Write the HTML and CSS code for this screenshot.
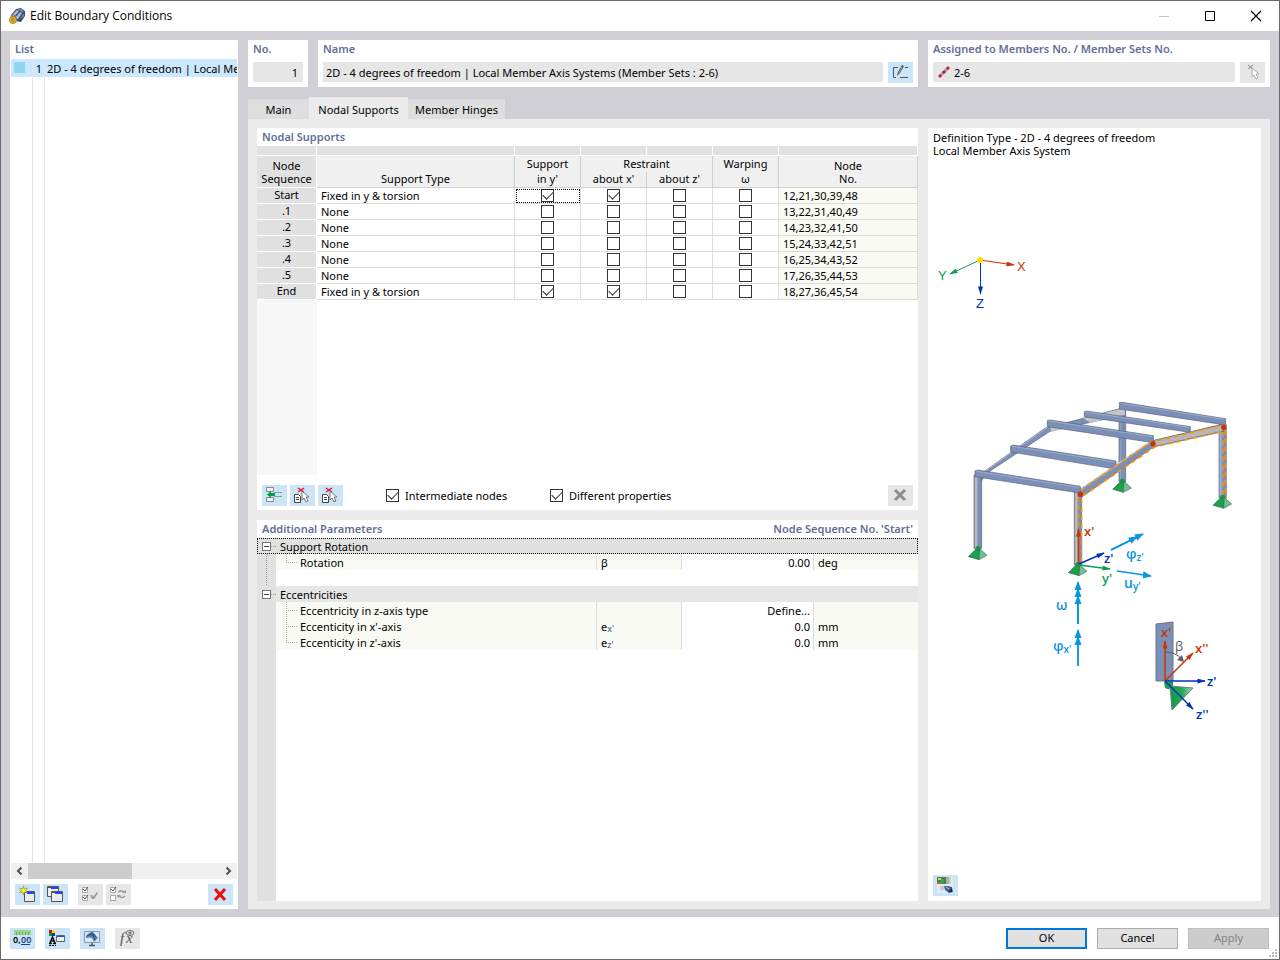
FILE: index.html
```html
<!DOCTYPE html>
<html lang="en">
<head>
<meta charset="utf-8">
<title>Edit Boundary Conditions</title>
<link rel="stylesheet" href="styles.css">
</head>
<body>
<div class="window">
  <header class="titlebar">
    <svg class="app-icon" width="16" height="16" viewBox="0 0 16 16" aria-hidden="true">
      <path d="M2 7 7 1l5-1 4 3v5l-4 6-5-1-4-2z" fill="#3f5374"/>
      <path d="M3 7 8 2l2 1-5 6zM6 10l5-6 2 1-4 6z" fill="#a9bad6"/>
      <path d="M8 1l4 0 3 2-2 1zM11 11l3-5 1 0v2z" fill="#6f88b4"/>
      <path d="M2 10V8q2-3 4 0v2" fill="none" stroke="#8a7a4a"/>
      <circle cx="4" cy="12" r="3.500" fill="#e2b93a" stroke="#a98420"/>
      <path d="M2.500 11h3M2.500 13h3" stroke="#8d6b14"/>
    </svg>
    <h1 class="window-title">Edit Boundary Conditions</h1>
    <div class="window-controls">
      <button class="win-btn" aria-label="Minimize" disabled><svg width="12" height="12" viewBox="0 0 12 12"><path d="M1 6.500h10" stroke="#c4c4c4"/></svg></button>
      <button class="win-btn" aria-label="Maximize"><svg width="12" height="12" viewBox="0 0 12 12"><path d="M1.500 1.500h9v9h-9z" fill="none" stroke="#000"/></svg></button>
      <button class="win-btn" aria-label="Close"><svg width="12" height="12" viewBox="0 0 12 12"><path d="M1 1l10 10M11 1 1 11" stroke="#000" stroke-width="1.200"/></svg></button>
    </div>
  </header>

  <main class="workspace">
    <section class="panel list-panel">
      <h2 class="panel-title">List</h2>
      <div class="list-box">
        <div class="list-row selected">
          <span class="list-cell"><i class="swatch"></i></span>
          <span class="list-cell num">1</span>
          <span class="list-name">2D - 4 degrees of freedom | Local Me</span>
        </div>
        <div class="list-row filler"><span class="list-cell"></span><span class="list-cell"></span><span></span></div>
      </div>
      <div class="scrollbar">
        <svg width="17" height="16" viewBox="0 0 17 16"><path d="M10.500 4.500 7 8l3.500 3.500" fill="none" stroke="#505050" stroke-width="2"/></svg>
        <div class="track"><div class="thumb"></div></div>
        <svg width="17" height="16" viewBox="0 0 17 16"><path d="M6.500 4.500 10 8l-3.500 3.500" fill="none" stroke="#505050" stroke-width="2"/></svg>
      </div>
      <div class="list-tools">
        <button class="icon-btn" aria-label="New"><svg width="25" height="21" viewBox="0 0 25 21"><path d="M9.500 7.500h10v10h-10z" fill="#ececec" stroke="#555"/><path d="M10 8.500h9" stroke="#555"/><path d="M12 8h7v2h-7z" fill="#2444ff"/><path d="M8.500 2l1 3 3-1-2 2.500 2 2-3-.5-1 3-1-3-3 .5 2-2-2-2.500 3 1z" fill="#ff0" stroke="#7d7d4a" stroke-width=".6"/></svg></button>
        <button class="icon-btn" aria-label="Copy"><svg width="25" height="21" viewBox="0 0 25 21"><path d="M4.500 2.500h11v10h-11z" fill="#ececec" stroke="#555"/><path d="M5 3.500h10" stroke="#555"/><path d="M8 3h7v2H8z" fill="#2444ff"/><path d="M8.500 7.500h11v10h-11z" fill="#ececec" stroke="#555"/><path d="M9 8.500h10" stroke="#555"/><path d="M12 8h7v2h-7z" fill="#2444ff"/></svg></button>
        <button class="icon-btn gap-left" aria-label="Check selected" disabled><svg width="25" height="21" viewBox="0 0 25 21"><path d="M4.500 3.500h5v5h-5zM4.500 11.500h5v5h-5z" fill="#fff" stroke="#aaa"/><path d="m5 5 2 2 3-4M5 13l2 2 3-4" fill="none" stroke="#555"/><path d="m12 11 2 0 1 2 4-5 1 1-4 6h-2z" fill="#999"/></svg></button>
        <button class="icon-btn" aria-label="Invert selection" disabled><svg width="25" height="21" viewBox="0 0 25 21"><path d="M4.500 3.500h5v5h-5zM4.500 11.500h5v5h-5z" fill="#fff" stroke="#aaa"/><path d="m5 5 2 2 3-4" fill="none" stroke="#555"/><path d="M12 8q3-2 6 0M19 12q-3 3-6 0" fill="none" stroke="#999" stroke-width="1.500"/><path d="m16 9 4 0V6zM11 11h4l-3 3z" fill="#999"/></svg></button>
        <button class="icon-btn push" aria-label="Delete"><svg width="25" height="21" viewBox="0 0 25 21"><path d="m7 5 10 11M17 5 7 16" stroke="#f00b0b" stroke-width="3"/></svg></button>
      </div>
    </section>

    <div class="editor">
      <div class="summary">
        <section class="panel field-panel">
          <label class="panel-title" for="no">No.</label>
          <div class="field-row"><input id="no" class="field right" value="1" readonly></div>
        </section>
        <section class="panel field-panel">
          <label class="panel-title" for="name">Name</label>
          <div class="field-row">
            <input id="name" class="field" value="2D - 4 degrees of freedom | Local Member Axis Systems (Member Sets : 2-6)" readonly>
            <button class="icon-btn" aria-label="Edit name"><svg width="25" height="21" viewBox="0 0 25 21"><path d="M10 5.500H5.500v10H8M12 15.500h8M17 5.500h3" fill="none" stroke="#555"/><path d="m9 14 1-4 4-7 2 1-4 7z" fill="#555"/><path d="m11 11 3-6" stroke="#999"/></svg></button>
          </div>
        </section>
        <section class="panel field-panel">
          <label class="panel-title" for="assigned">Assigned to Members No. / Member Sets No.</label>
          <div class="field-row">
            <div class="field icon-field">
              <svg width="12" height="12" viewBox="0 0 12 12"><path d="M2 10 10 2" stroke="#8aa0c8" stroke-width="3"/><circle cx="2" cy="10" r="1.500" fill="#e00"/><circle cx="6" cy="6" r="1.500" fill="#e00"/><circle cx="10" cy="2" r="1.500" fill="#e00"/></svg>
              <input id="assigned" class="bare-input" value="2-6" readonly>
            </div>
            <button class="icon-btn" aria-label="Select members" disabled><svg width="25" height="21" viewBox="0 0 25 21"><path d="m8 3 5 4M13 3 8 7" stroke="#888"/><path d="M12 6v9l2-2 2 4 2-1-2-4h3z" fill="#fff" stroke="#aaa"/></svg></button>
          </div>
        </section>
      </div>

      <div class="tabs" role="tablist">
        <button class="tab tab-main" role="tab">Main</button>
        <button class="tab tab-nodal active" role="tab" aria-selected="true">Nodal Supports</button>
        <button class="tab tab-hinges" role="tab">Member Hinges</button>
      </div>

      <div class="page">
        <section class="panel supports">
          <h2 class="panel-title">Nodal Supports</h2>
          <div class="grid-area">
          <table class="grid">
            <colgroup><col class="c-node"><col><col class="c-check"><col class="c-check"><col class="c-check"><col class="c-check"><col class="c-nos"></colgroup>
            <thead>
              <tr class="strip"><td></td><td></td><td></td><td></td><td></td><td></td><td></td></tr>
              <tr class="head-top"><th rowspan="2" class="row-head">Node<br>Sequence</th><th rowspan="2" class="low">Support Type</th><th class="open">Support</th><th colspan="2" class="open">Restraint</th><th class="open">Warping</th><th rowspan="2" class="low">Node<br>No.</th></tr>
              <tr class="head-sub"><th>in y'</th><th>about x'</th><th>about z'</th><th>ω</th></tr>
            </thead>
            <tbody>
              <tr><th>Start</th><td>Fixed in y &amp; torsion</td><td class="chk focus"><input type="checkbox" aria-label="Start support in y'" checked></td><td class="chk"><input type="checkbox" aria-label="Start restraint about x'" checked></td><td class="chk"><input type="checkbox" aria-label="Start restraint about z'"></td><td class="chk"><input type="checkbox" aria-label="Start warping"></td><td class="nos">12,21,30,39,48</td></tr>
              <tr><th>.1</th><td>None</td><td class="chk"><input type="checkbox" aria-label=".1 support in y'"></td><td class="chk"><input type="checkbox" aria-label=".1 restraint about x'"></td><td class="chk"><input type="checkbox" aria-label=".1 restraint about z'"></td><td class="chk"><input type="checkbox" aria-label=".1 warping"></td><td class="nos">13,22,31,40,49</td></tr>
              <tr><th>.2</th><td>None</td><td class="chk"><input type="checkbox" aria-label=".2 support in y'"></td><td class="chk"><input type="checkbox" aria-label=".2 restraint about x'"></td><td class="chk"><input type="checkbox" aria-label=".2 restraint about z'"></td><td class="chk"><input type="checkbox" aria-label=".2 warping"></td><td class="nos">14,23,32,41,50</td></tr>
              <tr><th>.3</th><td>None</td><td class="chk"><input type="checkbox" aria-label=".3 support in y'"></td><td class="chk"><input type="checkbox" aria-label=".3 restraint about x'"></td><td class="chk"><input type="checkbox" aria-label=".3 restraint about z'"></td><td class="chk"><input type="checkbox" aria-label=".3 warping"></td><td class="nos">15,24,33,42,51</td></tr>
              <tr><th>.4</th><td>None</td><td class="chk"><input type="checkbox" aria-label=".4 support in y'"></td><td class="chk"><input type="checkbox" aria-label=".4 restraint about x'"></td><td class="chk"><input type="checkbox" aria-label=".4 restraint about z'"></td><td class="chk"><input type="checkbox" aria-label=".4 warping"></td><td class="nos">16,25,34,43,52</td></tr>
              <tr><th>.5</th><td>None</td><td class="chk"><input type="checkbox" aria-label=".5 support in y'"></td><td class="chk"><input type="checkbox" aria-label=".5 restraint about x'"></td><td class="chk"><input type="checkbox" aria-label=".5 restraint about z'"></td><td class="chk"><input type="checkbox" aria-label=".5 warping"></td><td class="nos">17,26,35,44,53</td></tr>
              <tr><th>End</th><td>Fixed in y &amp; torsion</td><td class="chk"><input type="checkbox" aria-label="End support in y'" checked></td><td class="chk"><input type="checkbox" aria-label="End restraint about x'" checked></td><td class="chk"><input type="checkbox" aria-label="End restraint about z'"></td><td class="chk"><input type="checkbox" aria-label="End warping"></td><td class="nos">18,27,36,45,54</td></tr>
            </tbody>
          </table>
          <div class="row-head-fill"></div>
          </div>
          <div class="grid-tools">
            <button class="icon-btn" aria-label="Insert row"><svg width="25" height="21" viewBox="0 0 25 21"><path d="M4.500 2.500h7v4h-7zM4.500 12.500h7v4h-7z" fill="#f4f4f4" stroke="#888"/><path d="M12 7.500h8M12 11.500h8" stroke="#6cae86"/><path d="M5 9.500 9 6v2h4v3H9v2z" fill="#00a050"/></svg></button>
            <button class="icon-btn" aria-label="Pick node"><svg width="25" height="21" viewBox="0 0 25 21"><path d="M4.500 9.500h4l2 2v6h-6z" fill="#fff" stroke="#444"/><path d="M6 12.500h3M6 14.500h3" stroke="#444"/><path d="m8 3 6 4M14 3 8 7" stroke="#e01b24" stroke-width="1.500"/><path d="M12 6v9l2-2 2 4 2-1-2-4h3z" fill="#fff" stroke="#777"/></svg></button>
            <button class="icon-btn" aria-label="Pick nodes"><svg width="25" height="21" viewBox="0 0 25 21"><path d="M4.500 9.500h4l2 2v6h-6z" fill="#fff" stroke="#444"/><path d="M6 12.500h3M6 14.500h3" stroke="#444"/><path d="m8 3 6 4M14 3 8 7" stroke="#e01b24" stroke-width="1.500"/><path d="M12 6v9l2-2 2 4 2-1-2-4h3z" fill="#fff" stroke="#777"/></svg></button>
            <label class="option first"><input type="checkbox" checked>Intermediate nodes</label>
            <label class="option"><input type="checkbox" checked>Different properties</label>
            <button class="icon-btn push" aria-label="Clear" disabled><svg width="25" height="21" viewBox="0 0 25 21"><path d="m7 5 10 10M17 5 7 15" stroke="#8e8e8e" stroke-width="3"/></svg></button>
          </div>
        </section>

        <section class="panel params">
          <div class="panel-title split"><h2>Additional Parameters</h2><span>Node Sequence No. 'Start'</span></div>
          <div class="tree-area">
          <table class="tree">
            <colgroup><col class="t-gutter"><col><col class="t-symbol"><col class="t-value"><col class="t-unit"></colgroup>
            <tbody>
              <tr class="group current"><td class="gutter"><button class="expander" aria-label="Collapse Support Rotation"></button></td><td colspan="4">Support Rotation</td></tr>
              <tr class="item last"><td class="gutter line"></td><td class="name">Rotation</td><td>β</td><td class="value">0.00</td><td>deg</td></tr>
              <tr class="blank"><td class="gutter line"></td><td colspan="4"></td></tr>
              <tr class="group"><td class="gutter"><button class="expander" aria-label="Collapse Eccentricities"></button></td><td colspan="4">Eccentricities</td></tr>
              <tr class="item"><td class="gutter"></td><td class="name">Eccentricity in z-axis type</td><td></td><td class="value">Define...</td><td></td></tr>
              <tr class="item"><td class="gutter"></td><td class="name">Eccenticity in x'-axis</td><td>e<span class="sub">x'</span></td><td class="value">0.0</td><td>mm</td></tr>
              <tr class="item last"><td class="gutter"></td><td class="name">Eccenticity in z'-axis</td><td>e<span class="sub">z'</span></td><td class="value">0.0</td><td>mm</td></tr>
            </tbody>
          </table>
          <div class="gutter-fill"></div>
          </div>
        </section>

        <section class="panel preview">
          <p class="definition">Definition Type - 2D - 4 degrees of freedom<br>Local Member Axis System</p>
          <svg class="diagram" viewBox="928 165 333 705" preserveAspectRatio="xMidYMin meet" role="img" aria-label="Frame with supports and local axes">
            <defs>
              <linearGradient id="steel" x1="0" x2="1"><stop offset="0" stop-color="#8e9096"/><stop offset=".25" stop-color="#c6c7cc"/><stop offset=".45" stop-color="#9aa3b8"/><stop offset=".5" stop-color="#7c8fb6"/><stop offset="1" stop-color="#7c8fb6"/></linearGradient>
              <linearGradient id="cone" x1="0" x2="1"><stop offset="0" stop-color="#12994a"/><stop offset=".5" stop-color="#1fa753"/><stop offset="1" stop-color="#a5dcbb"/></linearGradient>
              <marker id="head-red" viewBox="0 0 10 6" refX="9" refY="3" markerWidth="9" markerHeight="5" markerUnits="userSpaceOnUse" orient="auto"><path d="M0 0 10 3 0 6z" fill="#cc3300"/></marker>
              <marker id="head-blue" viewBox="0 0 10 6" refX="9" refY="3" markerWidth="9" markerHeight="5" markerUnits="userSpaceOnUse" orient="auto"><path d="M0 0 10 3 0 6z" fill="#0033bb"/></marker>
              <marker id="head-green" viewBox="0 0 10 6" refX="9" refY="3" markerWidth="9" markerHeight="5" markerUnits="userSpaceOnUse" orient="auto"><path d="M0 0 10 3 0 6z" fill="#0aa14a"/></marker>
              <marker id="head-cyan" viewBox="0 0 10 8" refX="9" refY="4" markerWidth="9" markerHeight="8" markerUnits="userSpaceOnUse" orient="auto"><path d="M0 0 10 4 0 8z" fill="#0a96de"/></marker>
              <g id="support"><circle cx="0" cy="2" r="8" fill="#12994a" stroke="none"/><path d="M-7 4-29 26 3 35 5 8z" fill="#1aa04e" stroke="#48695a" stroke-width="2"/><path d="M7 4 27 22 3 35 5 8z" fill="#6cc38d" stroke="#48695a" stroke-width="2"/></g>
            </defs>

            <g fill="none" stroke-width="1">
              <path d="M980 260 1014 265" stroke="#cc3300" marker-end="url(#head-red)"/>
              <path d="M980 260 950 274" stroke="#0aa14a" marker-end="url(#head-green)"/>
              <path d="M980.500 260v34" stroke="#0033bb" marker-end="url(#head-blue)"/>
            </g>
            <circle cx="980" cy="260" r="3" fill="#ffdd00"/>
            <g class="axis-label"><text class="red" x="1017" y="271">X</text><text class="green" x="938" y="280">Y</text><text class="blue" x="976" y="308">Z</text></g>

            <g transform="translate(960 390) scale(.3333)" stroke="#59637a" stroke-width="2" stroke-linejoin="round">
              <path d="M477 60h20v215h-20z" fill="#7c8fb6"/>
              <path d="M481 65v208" stroke="#a3b1cc" stroke-width="2"/>
              <path d="m495 52v22L270 124 80 250 62 276 48 262 254 115z" fill="#7c8fb6"/>
              <path d="M495 54v20l-105 24-20-13zM270 112l50-13 40 5-85 21z" fill="#c3c5c9" stroke="none"/>
              <path d="m72 246 190-134" stroke="#b3bdd1" stroke-width="3"/>
              <path d="M478 38 486 37 797 86v16l-7 2-312-47z" fill="#7c8fb6"/>
              <path d="M482 40 794 88" stroke="#a9bbd8" stroke-width="2"/>
              <path d="M777 104h22v220h-22z" fill="#7c8fb6"/><path d="M779 106h6v216h-6z" fill="#a3b1cc" stroke="none"/>
              <path d="M373 65 380 63 691 110v14l-8 2-310-46z" fill="#7c8fb6"/><path d="M377 66 687 112" stroke="#a9bbd8" stroke-width="2"/>
              <path d="M343 300h22v225h-22z" fill="url(#steel)"/>
              <path d="M42 255h23v220H42z" fill="url(#steel)"/>
              <path d="M352 304 573 154 790 102v22L582 170 364 322z" fill="#7c8fb6"/>
              <path d="M582 151 790 103v20L582 170z" fill="#b4b7bd"/>
              <path d="M357 301 575 153" stroke="#c5cbd9" stroke-width="4"/>
              <path d="M262 92 270 90 580 137v18l-7 2-311-47z" fill="#7c8fb6"/><path d="M266 93 576 140" stroke="#a9bbd8" stroke-width="2"/>
              <path d="M152 168 159 165 468 213v10l-14 12-302-49z" fill="#7c8fb6"/><path d="M156 169 464 216" stroke="#a9bbd8" stroke-width="2"/>
              <path d="M45 243 53 240 361 289v17l-8 2L45 260z" fill="#7c8fb6"/><path d="M49 244 357 292" stroke="#a9bbd8" stroke-width="2"/>
              <g fill="none" stroke="#ff9500" stroke-width="5" stroke-dasharray="14 11">
                <path d="M355 320v200M363 300 572 157 790 105M370 317 584 171 790 124M797 120v205"/>
                <path d="M365 326v194M789 126v199" stroke-width="4"/>
              </g>
              <g fill="#cc3300" stroke="none"><circle cx="361" cy="313" r="8"/><circle cx="579" cy="161" r="8"/><circle cx="791" cy="112" r="8"/></g>
              <use href="#support" x="54" y="474"/><use href="#support" x="487" y="272"/><use href="#support" x="788" y="320"/><use href="#support" x="354" y="522"/>
            </g>

            <g fill="none" stroke-width="1.500">
              <path d="M1078.500 564v-35" stroke="#cc3300" marker-end="url(#head-red)"/>
              <path d="M1079 564 1104 553" stroke="#0033bb" marker-end="url(#head-blue)"/>
              <path d="M1079 565 1110 569" stroke="#0aa14a" marker-end="url(#head-green)"/>
              <path d="M1111 550 1143 534" stroke="#0a96de" marker-end="url(#head-cyan)"/>
              <path d="M1111 550 1137 537" stroke="#0a96de" marker-end="url(#head-cyan)"/>
              <path d="M1117 571 1151 576" stroke="#0a96de" marker-end="url(#head-cyan)"/>
              <path d="M1078 624v-42" stroke="#0a96de" marker-end="url(#head-cyan)"/>
              <path d="M1078 624v-35" stroke="#0a96de" marker-end="url(#head-cyan)"/>
              <path d="M1078 624v-28" stroke="#0a96de" marker-end="url(#head-cyan)"/>
              <path d="M1078 666v-36" stroke="#0a96de" marker-end="url(#head-cyan)"/>
              <path d="M1078 666v-29" stroke="#0a96de" marker-end="url(#head-cyan)"/>
            </g>
            <g class="local-label">
              <text class="red" x="1084" y="536">x'</text><text class="blue" x="1104" y="563">z'</text><text class="green" x="1102" y="583">y'</text>
              <text class="red" x="1195" y="653">x''</text><text class="blue" x="1207" y="686">z'</text><text class="blue" x="1196" y="719">z''</text>
            </g>
            <g class="motion-label">
              <text x="1126" y="559">φ<tspan class="index" dy="2">z'</tspan></text><text x="1124" y="588">u<tspan class="index" dy="2">y'</tspan></text>
              <text x="1056" y="610">ω</text><text x="1053" y="651">φ<tspan class="index" dy="2">x'</tspan></text>
            </g>

            <path d="M1156 624 1173 622v59h-17z" fill="#7c8fb6" stroke="#6d7486"/>
            <path d="M1164 682h9v4q-3 5-8 2z" fill="#1aa04e"/>
            <path d="M1170 686 1193 688 1172 710z" fill="url(#cone)" stroke="#6d7f74"/>
            <g fill="none" stroke-width="1.500">
              <path d="M1165 681v-40" stroke="#cc3300" marker-end="url(#head-red)"/>
              <path d="M1165 681 1193 653" stroke="#cc3300" marker-end="url(#head-red)"/>
              <path d="M1165 681h40" stroke="#0033bb" marker-end="url(#head-blue)"/>
              <path d="M1165 681 1193 709" stroke="#0033bb" marker-end="url(#head-blue)"/>
              <path d="M1165 652q10 0 17 7" stroke="#5c5c6c" stroke-width="1"/>
            </g>
            <path d="m1184 662-7-2 5-5z" fill="#5c5c6c"/>
            <g class="local-label"><text class="red" x="1161" y="637">x'</text><text class="beta" x="1175" y="651">β</text></g>
          </svg>
          <div class="preview-tools">
            <button class="icon-btn" aria-label="Switch picture"><svg width="25" height="21" viewBox="0 0 25 21"><path d="M4 2h16v16H4z" fill="#e6eae8"/><path d="M4 2h9v7H4z" fill="#55765f"/><path d="M5 3h3v2H5z" fill="#f2cf3c"/><path d="M8 4h3v4H8z" fill="#18b558"/><path d="M4 7h5v2H4z" fill="#b0702c"/><path d="M13 2h3v7h-3z" fill="#9db5a4"/><path d="M16 2h2v7h-2z" fill="#c6d4c9"/><path d="M7 11h4v4H7z" fill="#c3cad6"/><path d="M11 11h4l4 1 1 5-4 1-4-3z" fill="#42608e"/><path d="m15 17 4-4v4z" fill="#172840"/><path d="m13 12 3 2" stroke="#b8cde8"/></svg></button>
          </div>
        </section>
      </div>
    </div>
  </main>

  <footer class="footer">
    <div class="footer-tools">
      <button class="icon-btn" aria-label="Units"><svg width="25" height="21" viewBox="0 0 25 21"><path d="M4 2h17v5H4z" fill="#9bd48d"/><path d="M6.500 4v3M9.500 4v3M12.500 4v3M15.500 4v3M18.500 4v3" stroke="#6fae62"/><text class="icon-text" x="3" y="15">0,</text><text class="icon-text navy" x="11" y="15">00</text><path d="M11 16.500h9" stroke="#1b3c94"/></svg></button>
      <button class="icon-btn" aria-label="Display properties"><svg width="25" height="21" viewBox="0 0 25 21"><path d="M4 2h3v3H4z" fill="#e00"/><path d="M7 2h3v3H7z" fill="#fd0"/><path d="M4 5h3v3H4z" fill="#00a030"/><path d="M7 5h3v3H7z" fill="#13c"/><path d="M5 15 7.500 9 10 15M6 13h3M4 15.500h3M8 15.500h3" stroke="#111" stroke-width="1.500" fill="none"/><path d="M4 17.500h7" stroke="#111" stroke-dasharray="2 1"/><path d="M11.500 7.500h8v6h-8z" fill="#eee" stroke="#666"/><path d="M12 8h7v1h-7z" fill="#224ae0"/></svg></button>
      <button class="icon-btn" aria-label="View"><svg width="25" height="21" viewBox="0 0 25 21"><path d="M4.500 3.500h15v11h-15z" fill="#d6e8f7" stroke="#8c979e"/><path d="M6 8q3-4 7-4l5 6-4 4-2-4q-3-1-6 0z" fill="#5a83b3"/><path d="M7 8q3-2 6-1l2 5M10 5q4 0 6 4" fill="none" stroke="#294769"/><path d="M12 15v2M9 17.500h6" stroke="#555" stroke-width="1.500"/></svg></button>
      <button class="icon-btn" aria-label="Formula" disabled><svg width="25" height="21" viewBox="0 0 25 21"><text class="formula" x="5" y="15">f</text><text class="formula" x="11" y="15">x</text><ellipse cx="15" cy="5" rx="4" ry="2.500" fill="#ddd" stroke="#777"/><circle cx="15" cy="5" r="1.500" fill="#777"/></svg></button>
    </div>
    <div class="dialog-buttons">
      <button class="btn primary">OK</button>
      <button class="btn">Cancel</button>
      <button class="btn" disabled>Apply</button>
    </div>
    <svg class="grip" width="9" height="9" viewBox="0 0 9 9" aria-hidden="true"><path d="M6 0h2v2H6zM3 3h2v2H3zM6 3h2v2H6zM0 6h2v2H0zM3 6h2v2H3zM6 6h2v2H6z" fill="#bfbfbf"/></svg>
  </footer>
</div>
</body>
</html>
```

FILE: styles.css
```css
* { box-sizing: border-box; }
html, body { height: 100%; }
body {
  margin: 0;
  font: 11px/16px "Noto Sans", "Open Sans", sans-serif;
  color: #000;
}
button, input { font: inherit; color: inherit; margin: 0; }
button { padding: 0; border: 0; background: none; }
h1, h2, p { margin: 0; font: inherit; }
svg { display: block; }

.window {
  display: flex;
  flex-direction: column;
  min-height: 100%;
  border: 1px solid #6b6b6b;
  background: #fff;
}

/* Title bar */
.titlebar { display: flex; align-items: center; height: 30px; padding-left: 8px; }
.window-title { margin-left: 5px; font: 12px/16px "Open Sans", sans-serif; }
.window-controls { display: flex; margin-left: auto; }
.win-btn { display: flex; align-items: center; justify-content: center; width: 46px; height: 28px; }

/* Main area */
.workspace {
  flex: 1;
  display: flex;
  gap: 10px;
  padding: 9px 9px 8px;
  background: #d0cfd5;
}
.panel { background: #fff; min-width: 0; }
.panel-title {
  display: block;
  height: 18px;
  padding: 0 5px;
  line-height: 18px;
  font-weight: 600;
  color: #5f6f97;
}
.split { display: flex; justify-content: space-between; }

.icon-btn { flex: none; width: 25px; height: 21px; background: #cce4f7; }
.icon-btn:disabled { background: #e6e6e6; }
.push { margin-left: auto; }

/* List */
.list-panel { display: flex; flex-direction: column; flex: none; width: 228px; }
.list-box { flex: 1; display: flex; flex-direction: column; margin: 1px 1px 0; }
.list-row { display: grid; grid-template-columns: 22px 12px 1fr; height: 18px; line-height: 20px; }
.list-row.selected { background: #cce8ff; }
.list-row.filler { flex: 1; height: auto; }
.list-cell { border-right: 1px solid #e6e6e6; }
.num { text-align: right; padding-right: 2px; }
.list-name { padding-left: 2px; overflow: hidden; white-space: nowrap; }
.swatch { display: block; width: 11px; height: 11px; margin: 3px; background: #8fd6f5; }
.scrollbar { display: flex; height: 16px; margin: 1px 1px 0; background: #f0f0f0; }
.track { flex: 1; }
.thumb { width: 54%; height: 16px; background: #cdcdcd; }
.list-tools { display: flex; gap: 3px; padding: 5px 5px 4px; }
.gap-left { margin-left: 7px; }

/* Summary fields */
.editor { flex: 1; display: flex; flex-direction: column; min-width: 0; }
.summary { display: grid; grid-template-columns: 60px 1fr 342px; gap: 10px; }
.field-panel { height: 47px; }
.field-row { display: flex; gap: 5px; padding: 4px 5px; }
.field {
  flex: 1;
  min-width: 0;
  height: 20px;
  padding: 1px 3px 0;
  border: 0;
  background: #e6e6e6;
}
.right { text-align: right; padding-right: 5px; }
.icon-field { display: flex; align-items: center; gap: 4px; padding: 0 5px; }
.bare-input { flex: 1; min-width: 0; height: 20px; padding: 1px 0 0; border: 0; background: none; }

/* Tabs */
.tabs { display: flex; align-items: flex-end; margin-top: 10px; height: 22px; }
.tab { height: 20px; padding-top: 2px; background: #dedede; white-space: nowrap; }
.tab.active { height: 22px; padding-top: 4px; background: #ebebeb; }
.tab-main { width: 61px; }
.tab-nodal { width: 99px; }
.tab-hinges { width: 97px; }

.page {
  flex: 1;
  display: grid;
  grid-template-columns: 1fr 333px;
  grid-template-rows: 382px 1fr;
  gap: 10px;
  padding: 9px 9px 8px;
  background: #ebebeb;
}

/* Supports grid */
.supports { display: flex; flex-direction: column; }
.grid-area { flex: 1; display: flex; flex-direction: column; }
.grid, .tree { width: 100%; table-layout: fixed; border-collapse: separate; border-spacing: 0; }
.grid th, .grid td, .tree td { padding: 0; font-weight: 400; height: 16px; line-height: 15px; white-space: nowrap; }
.c-node { width: 60px; }
.c-check { width: 66px; }
.c-nos { width: 139px; }
.grid .strip td { height: 10px; background: #e1e1e1; border-right: 1px solid #fff; border-bottom: 1px solid #fff; }
.grid thead th { line-height: 13px; padding-bottom: 2px; background: #f0f0f0; border-right: 1px solid #d0d0d0; border-bottom: 1px solid #d0d0d0; }
.grid thead .open { border-bottom: 0; }
.grid thead .low { vertical-align: bottom; }
.grid thead .row-head { vertical-align: bottom; background: #e1e1e1; border-color: #fff; }
.grid tbody th { background: #e1e1e1; border-right: 1px solid #fff; border-bottom: 1px solid #fff; line-height: 13px; padding-bottom: 2px; }
.grid tbody td { border-right: 1px solid #dcdcdc; border-bottom: 1px solid #dcdcdc; padding-left: 4px; }
.grid tbody .chk { padding: 0; text-align: center; }
.grid .focus { outline: 1px dotted #000; outline-offset: -2px; }
.grid .nos { background: #f9faf4; }
.row-head-fill { flex: 1; width: 60px; background: #f7f7f7; }

input[type="checkbox"] {
  appearance: none;
  flex: none;
  display: block;
  width: 13px;
  height: 13px;
  margin: 0 auto;
  border: 1px solid #333;
  background: #fff;
}
input[type="checkbox"]:checked::before {
  content: "";
  display: block;
  width: 9px;
  height: 5px;
  margin: 1px;
  border: solid #333;
  border-width: 0 0 1px 1px;
  transform: rotate(-45deg);
}

.grid-tools { display: flex; align-items: center; gap: 3px; height: 35px; padding: 10px 5px 4px; }
.option { display: flex; align-items: center; gap: 6px; width: 164px; }
.option input[type="checkbox"] { margin: 0; }
.option.first { margin-left: 40px; width: 161px; }

/* Parameters tree */
.params { display: flex; flex-direction: column; }
.tree-area { flex: 1; display: flex; flex-direction: column; }
.t-gutter { width: 19px; }
.t-symbol { width: 85px; }
.t-value { width: 132px; }
.t-unit { width: 104px; }
.tree td { line-height: 14px; padding-top: 2px; }
.tree .gutter { padding-top: 0; background: #e1e1e1; }
.tree .group td { background: #e6e6e6; padding-left: 4px; }
.tree .current td { background: #e1e1e1; }
.tree .current { outline: 1px dotted #000; outline-offset: -1px; }
.tree .item td { background: #f9faf4; padding-left: 4px; border-right: 1px solid #dcdcdc; }
.tree .item td:last-child { border-right: 0; }
.tree .item .gutter { background: #e1e1e1; border-right: 0; }
.tree .item .value { background: #fff; text-align: right; padding-right: 3px; }
.tree .item .name {
  padding-left: 24px;
  background:
    repeating-linear-gradient(90deg, #aaa 0 1px, transparent 1px 2px) 10px 8px / 11px 1px no-repeat,
    repeating-linear-gradient(#aaa 0 1px, transparent 1px 2px) 10px 0 / 1px 16px no-repeat,
    #f9faf4;
}
.tree .item.last .name {
  background:
    repeating-linear-gradient(90deg, #aaa 0 1px, transparent 1px 2px) 10px 8px / 11px 1px no-repeat,
    repeating-linear-gradient(#aaa 0 1px, transparent 1px 2px) 10px 0 / 1px 8px no-repeat,
    #f9faf4;
}
.tree .item .gutter.line, .tree .gutter.line {
  background: repeating-linear-gradient(#999 0 1px, transparent 1px 2px) 9px 0 / 1px 16px no-repeat, #e1e1e1;
}
.tree .group .gutter {
  padding: 0 0 0 5px;
  background: repeating-linear-gradient(90deg, #999 0 1px, transparent 1px 2px) 14px 8px / 5px 1px no-repeat, #e1e1e1;
}
.expander {
  display: block;
  width: 9px;
  height: 9px;
  border: 1px solid #777;
  background: linear-gradient(#444, #444) center / 5px 1px no-repeat #fff;
}
.sub { font-size: 9px; vertical-align: -1px; line-height: 1; color: #3b4f85; }
.gutter-fill { flex: 1; width: 19px; background: #e1e1e1; }

/* Preview */
.preview { grid-column: 2; grid-row: 1 / 3; display: flex; flex-direction: column; padding: 3px 0 5px; }
.definition { padding: 0 5px; line-height: 13px; }
.diagram { flex: 1; width: 100%; margin-top: 8px; min-height: 0; }
.preview-tools { display: flex; padding: 0 5px; }
.axis-label { font: 13px "Liberation Sans", sans-serif; }
.local-label { font: 600 13px "Open Sans", sans-serif; }
.motion-label { font: 600 14px "Open Sans", sans-serif; fill: #0a96de; }
.index { font-size: 10px; }
.beta { font-weight: 400; fill: #5c5c6c; }
.red { fill: #cc3300; }
.green { fill: #0aa14a; }
.blue { fill: #0033bb; }

/* Footer */
.footer { position: relative; display: flex; justify-content: space-between; align-items: center; height: 42px; padding: 0 10px 0 9px; }
.footer-tools, .dialog-buttons { display: flex; gap: 10px; }
.btn { width: 81px; height: 21px; border: 1px solid #adadad; background: #e1e1e1; }
.btn.primary { border: 2px solid #0078d7; }
.btn:disabled { border-color: #bfbfbf; background: #cccccc; color: #838383; }
.icon-text { font: 600 9px "Noto Sans", sans-serif; }
.navy { fill: #1b3c94; }
.formula { font: italic 15px "Liberation Serif", serif; fill: #555; }
.grip { position: absolute; right: 1px; bottom: 1px; }
```
